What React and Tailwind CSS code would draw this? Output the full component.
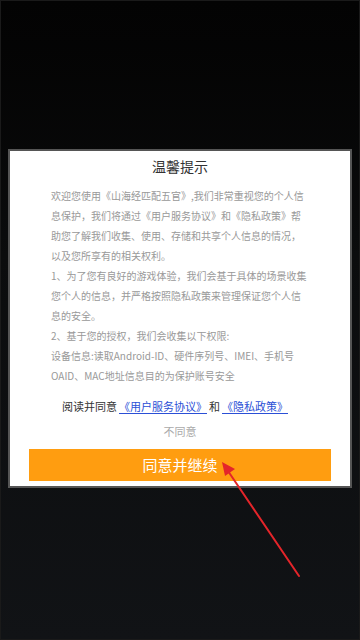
export default function App() {
  const font = { fontFamily: '"Noto Sans CJK SC", "Noto Sans", sans-serif' };
  return (
    <div className="relative w-[360px] h-[640px] overflow-hidden border border-[#1a1a1a] bg-linear-to-b from-[#030303] via-[#0b0c0d] via-40% to-[#111316]" style={font}>
      <div className="flex flex-col pt-[148px] px-[7px]">
        <div className="border-2 border-[#555] bg-white flex flex-col items-center">
          <div className="h-[30px] flex items-center justify-center text-[14px] text-[#333]">温馨提示</div>
          <div className="mt-[5px] w-[258px] text-[10px] leading-[20px] text-[#999]">
            <p>欢迎您使用《山海经匹配五官》,我们非常重视您的个人信息保护，我们将通过《用户服务协议》和《隐私政策》帮助您了解我们收集、使用、存储和共享个人信息的情况，以及您所享有的相关权利。</p>
            <p>1、为了您有良好的游戏体验，我们会基于具体的场景收集您个人的信息，并严格按照隐私政策来管理保证您个人信息的安全。</p>
            <p>2、基于您的授权，我们会收集以下权限:</p>
            <p>设备信息:读取Android-ID、硬件序列号、IMEI、手机号OAID、MAC地址信息目的为保护账号安全</p>
          </div>
          <div className="mt-[10px] h-[20px] flex items-center text-[11px] text-[#333] -ml-[8px]">
            <span>阅读并同意</span>
            <span className="text-[#2b4fd6] underline underline-offset-2 pl-[2px] pr-[2px]">《用户服务协议》</span>
            <span>和</span>
            <span className="text-[#2b4fd6] underline underline-offset-2 pl-[2px] pr-[2px]">《隐私政策》</span>
          </div>
          <div className="mt-[5px] h-[20px] flex items-center text-[11px] text-[#aaa]">不同意</div>
          <div className="mt-[8px] mb-[5px] w-[302px] h-[32px] bg-[#ff9d10] flex items-center justify-center text-[15px] text-white">同意并继续</div>
        </div>
      </div>
      <svg className="absolute left-0 top-0 pointer-events-none" width="360" height="640" viewBox="0 0 360 640">
        <line x1="298" y1="575" x2="227" y2="470" stroke="#e4252a" strokeWidth="2" strokeLinecap="round" />
        <polygon points="221,461 234,468 224,475" fill="#e4252a" />
      </svg>
    </div>
  );
}
